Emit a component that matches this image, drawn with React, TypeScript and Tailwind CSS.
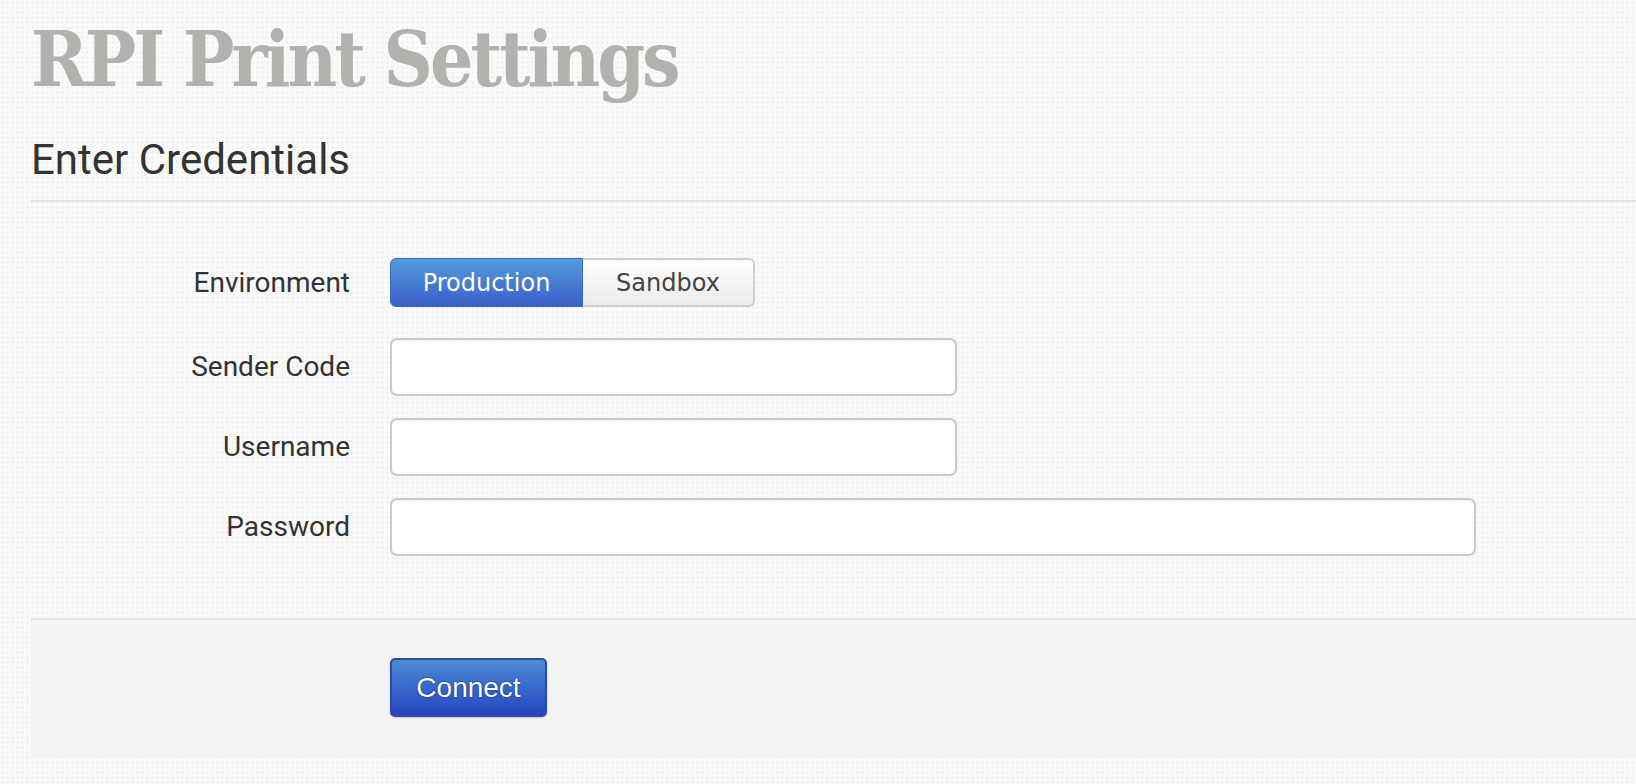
import React from 'react';

const labelCls =
  "w-[359px] shrink-0 pr-[40px] text-right text-[28px] text-[#333] font-['Roboto',sans-serif]";

function Field({ label, width }: { label: string; width: string }) {
  return (
    <div className="flex items-center h-[58px] mb-[22px]">
      <label className={labelCls}>{label}</label>
      <input
        type="text"
        className={`${width} h-[58px] rounded-[7px] border-2 border-[#cacaca] bg-white shadow-[inset_0_1px_2px_rgba(0,0,0,0.06)] outline-none px-3`}
      />
    </div>
  );
}

export default function App() {
  return (
    <div className="min-h-screen bg-[#fafafa] bg-[radial-gradient(circle,#f0f0f0_1px,transparent_1.3px)] bg-[length:5px_5px] overflow-hidden">
      <div className="pl-[31px] flex flex-col">
        <h1 className="mt-[22px] text-[76px] leading-none font-bold text-[#b1b1ae] tracking-[-3px] [font-stretch:condensed] font-['DejaVu_Serif_Condensed','DejaVu_Serif',serif]">
          RPI Print Settings
        </h1>
        <h2 className="mt-[41px] mb-[19px] text-[42px] leading-none text-[#333] font-['Roboto',sans-serif]">
          Enter Credentials
        </h2>
        <div className="border-t-2 border-[#e3e3e3]" />

        {/* form */}
        <div className="pt-[56px] flex flex-col">
          <div className="flex items-center h-[49px] mb-[31px]">
            <span className={labelCls}>Environment</span>
            <div className="flex h-[49px] font-['DejaVu_Sans',sans-serif] text-[24px]">
              <button className="w-[193px] h-full rounded-l-[6px] border border-[#3b67c6] bg-gradient-to-b from-[#569bdb] to-[#3a5ec7] text-white">
                Production
              </button>
              <button className="w-[172px] h-full rounded-r-[6px] border-2 border-l-0 border-[#cdcdcd] bg-gradient-to-b from-[#fefefe] to-[#ebebeb] text-[#444]">
                Sandbox
              </button>
            </div>
          </div>
          <Field label="Sender Code" width="w-[567px]" />
          <Field label="Username" width="w-[567px]" />
          <Field label="Password" width="w-[1086px]" />
        </div>

        {/* actions */}
        <div className="mt-[40px] border-t-2 border-[#e6e6e6] bg-[#f4f4f4] pl-[359px] pt-[38px] pb-[40px]">
          <button className="w-[157px] h-[59px] rounded-[5px] border-2 border-[#2c4ba6] bg-gradient-to-b from-[#4d8ad3] to-[#2a43c1] text-white text-[28px] font-['Liberation_Sans',Arial,sans-serif] [text-shadow:0_0_2px_rgba(0,0,60,0.7)] shadow-[0_1px_2px_rgba(0,0,0,0.2)]">
            Connect
          </button>
        </div>
      </div>
    </div>
  );
}
